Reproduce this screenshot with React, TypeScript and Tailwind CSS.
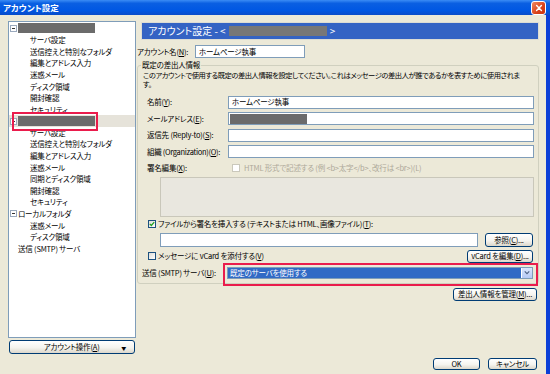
import React from 'react';

const FONT = "font-['Noto_Sans_CJK_JP',sans-serif] [font-feature-settings:'palt']";

function U({ c }: { c: string }) {
  return <span className="underline underline-offset-[1px] decoration-[0.5px]">{c}</span>;
}

function Btn({ children, className = '' }: { children: React.ReactNode; className?: string }) {
  return (
    <div
      className={`flex items-center justify-center whitespace-nowrap rounded-[3px] border border-[#003c74] bg-[linear-gradient(to_bottom,#ffffff_0%,#f5f4ef_55%,#dcd7cb_100%)] leading-none text-black ${className}`}
    >
      {children}
    </div>
  );
}

function Check({ checked = false, disabled = false }: { checked?: boolean; disabled?: boolean }) {
  return (
    <div
      className={`flex h-[8px] w-[8px] shrink-0 items-center justify-center border ${
        disabled ? 'border-[#cac8bb] bg-white' : 'border-[#1c5180] bg-[linear-gradient(135deg,#dcdcd7,#ffffff)]'
      }`}
    >
      {checked && (
        <svg viewBox="0 0 8 8" className="h-[6px] w-[6px]">
          <path d="M1 3.8 L3.1 6 L7 1.6" stroke="#21a121" strokeWidth="1.7" fill="none" />
        </svg>
      )}
    </div>
  );
}

function Minus() {
  return (
    <div className="flex h-[7px] w-[7px] shrink-0 items-center justify-center border border-[#9aa9bd] bg-white">
      <div className="h-[1px] w-[3px] bg-[#333]" />
    </div>
  );
}

type Row = { t?: string; kind: 'root' | 'child' | 'plain' | 'redacted'; minus?: boolean; sel?: boolean };

const tree: Row[] = [
  { kind: 'redacted', minus: true },
  { t: 'サーバ設定', kind: 'child' },
  { t: '送信控えと特別なフォルダ', kind: 'child' },
  { t: '編集とアドレス入力', kind: 'child' },
  { t: '迷惑メール', kind: 'child' },
  { t: 'ディスク領域', kind: 'child' },
  { t: '開封確認', kind: 'child' },
  { t: 'セキュリティ', kind: 'child' },
  { kind: 'redacted', minus: true, sel: true },
  { t: 'サーバ設定', kind: 'child' },
  { t: '送信控えと特別なフォルダ', kind: 'child' },
  { t: '編集とアドレス入力', kind: 'child' },
  { t: '迷惑メール', kind: 'child' },
  { t: '同期とディスク領域', kind: 'child' },
  { t: '開封確認', kind: 'child' },
  { t: 'セキュリティ', kind: 'child' },
  { t: 'ローカルフォルダ', kind: 'root', minus: true },
  { t: '迷惑メール', kind: 'child' },
  { t: 'ディスク領域', kind: 'child' },
  { t: '送信 (SMTP) サーバ', kind: 'plain' },
];

function TreeRow({ r }: { r: Row }) {
  const base = `flex h-[11.6px] items-center whitespace-nowrap ${r.sel ? 'bg-[#e6e3da]' : ''}`;
  if (r.kind === 'child') return <div className={`${base} pl-[21px]`}>{r.t}</div>;
  if (r.kind === 'plain') return <div className={`${base} pl-[9px]`}>{r.t}</div>;
  return (
    <div className={`${base} gap-[1px] pl-[1px]`}>
      {r.minus ? <Minus /> : <div className="w-[7px]" />}
      {r.kind === 'redacted' ? <div className="h-[10px] w-[77px] bg-[#6b6b6b]" /> : <span>{r.t}</span>}
    </div>
  );
}

function Field({ children, className = '' }: { children?: React.ReactNode; className?: string }) {
  return (
    <div className={`flex min-w-0 items-center border border-[#7f9db9] bg-white pl-[3px] leading-none ${className}`}>
      {children}
    </div>
  );
}

export default function App() {
  return (
    <div
      className={`relative flex h-[374px] w-[550px] flex-col overflow-hidden bg-[#ece9d8] text-[7.5px] leading-none tracking-[-0.2px] text-black ${FONT}`}
    >
      {/* title bar */}
      <div className="flex h-[15px] shrink-0 items-center justify-between bg-[linear-gradient(to_bottom,#3b8cf5_0%,#0a5fe2_22%,#0057e3_70%,#0a4cc9_100%)] pl-[3px] pr-[4px]">
        <span className="text-[8.5px] font-bold tracking-normal text-white">アカウント設定</span>
        <div className="flex h-[14px] w-[15px] items-center justify-center rounded-[3px] border border-white bg-[linear-gradient(135deg,#f08a63,#d9421a_60%,#c9330f)]">
          <svg viewBox="0 0 10 10" className="h-[8px] w-[8px]">
            <path d="M2 2 L8 8 M8 2 L2 8" stroke="white" strokeWidth="1.8" strokeLinecap="round" />
          </svg>
        </div>
      </div>

      {/* body */}
      <div className="flex min-h-0 flex-1 border-r-[4px] border-[#0b3fd7]">
        {/* left */}
        <div className="flex w-[137px] shrink-0 flex-col pl-[8px] pt-[6px]">
          <div className="h-[317px] w-[128px] overflow-hidden border border-[#7f9db9] bg-white pt-[0.5px]">
            {tree.map((r, i) => (
              <TreeRow key={i} r={r} />
            ))}
          </div>
          <Btn className="ml-[1px] mt-[2px] h-[14px] w-[126px] !justify-between px-[8px]">
            <span className="w-[4px]" />
            <span>
              アカウント操作(<U c="A" />)
            </span>
            <span className="text-[5px]">▼</span>
          </Btn>
        </div>

        {/* right */}
        <div className="flex w-[402px] min-w-0 shrink-0 flex-col pt-[7px]">
          <div className="ml-[4px] flex h-[18px] w-[398px] items-center gap-[3px] border border-[#dcdcd4] bg-[#3463c4] pl-[6px] text-[10px] tracking-normal text-white">
            <span>アカウント設定 - &lt;</span>
            <div className="h-[10px] w-[98px] bg-[#777777]" />
            <span>&gt;</span>
          </div>

          <div className="mt-[5px] flex h-[13px] items-center">
            <span className="w-[58px] whitespace-nowrap">
              アカウント名(<U c="N" />):
            </span>
            <Field className="h-[13px] w-[110px]">ホームページ執事</Field>
          </div>

          <fieldset className="mt-[3px] min-w-0 rounded-[3px] border border-[#d0d0bf] pb-[4px]">
            <legend className="ml-[3px] px-[1px] leading-[8px]">既定の差出人情報</legend>
            <div className="mt-[1.5px] flex flex-col gap-[1px] whitespace-nowrap pl-[5px] text-[7.3px] leading-[8.5px] tracking-[-0.45px]">
              <div>このアカウントで使用する既定の差出人情報を設定してください。これはメッセージの差出人が誰であるかを表すために使用されま</div>
              <div>す。</div>
            </div>

            <div className="mt-[7px] flex flex-col gap-[3.5px] pl-[9px] pr-[4px]">
              <div className="flex h-[13px] items-center">
                <span className="w-[81px] shrink-0 whitespace-nowrap">
                  名前(<U c="Y" />):
                </span>
                <Field className="h-[13px] flex-1">ホームページ執事</Field>
              </div>
              <div className="flex h-[13px] items-center">
                <span className="w-[81px] shrink-0 whitespace-nowrap">
                  メールアドレス(<U c="E" />):
                </span>
                <Field className="h-[13px] flex-1 !pl-[1px]">
                  <div className="h-[10px] w-[77px] bg-[#6b6b6b]" />
                </Field>
              </div>
              <div className="flex h-[13px] items-center">
                <span className="w-[81px] shrink-0 whitespace-nowrap">
                  返信先 (Reply-to)(<U c="S" />):
                </span>
                <Field className="h-[13px] flex-1" />
              </div>
              <div className="flex h-[13px] items-center">
                <span className="w-[81px] shrink-0 whitespace-nowrap tracking-[-0.3px]">
                  組織 (Organization)(<U c="O" />):
                </span>
                <Field className="h-[13px] flex-1" />
              </div>
            </div>

            <div className="mt-[5.5px] flex h-[8px] items-center whitespace-nowrap pl-[9px]">
              <span className="w-[85px] shrink-0">
                署名編集(<U c="X" />):
              </span>
              <Check disabled />
              <span className="ml-[4px] text-[#aca899]">
                HTML 形式で記述する (例 &lt;b&gt;太字&lt;/b&gt;、改行は &lt;br&gt;)(L)
              </span>
            </div>

            <div className="mt-[5px] pl-[22px] pr-[4px]">
              <div className="h-[40px] border border-[#c9c7ba] bg-[#e9e7df]" />
            </div>

            <div className="mt-[2.5px] flex h-[9px] items-center gap-[2px] whitespace-nowrap pl-[10px]">
              <Check checked />
              <span>
                ファイルから署名を挿入する (テキストまたは HTML、画像ファイル)(<U c="T" />):
              </span>
            </div>

            <div className="mt-[4.5px] flex h-[14px] items-center gap-[7px] pl-[22px] pr-[5px]">
              <Field className="h-[14px] flex-1" />
              <Btn className="h-[14px] w-[48px] shrink-0">
                参照(<U c="C" />)...
              </Btn>
            </div>

            <div className="mt-[3px] flex h-[13px] items-center justify-between pl-[10px] pr-[5px]">
              <div className="flex items-center gap-[2px] whitespace-nowrap">
                <Check />
                <span>
                  メッセージに vCard を添付する(<U c="V" />)
                </span>
              </div>
              <Btn className="h-[13px] w-[66px] shrink-0">
                vCard を編集(<U c="D" />)...
              </Btn>
            </div>

            <div className="mt-[4px] flex h-[12px] items-center pl-[4px] pr-[5px]">
              <span className="w-[85px] shrink-0 whitespace-nowrap">
                送信 (SMTP) サーバ(<U c="U" />):
              </span>
              <div className="flex h-[12px] min-w-0 flex-1 items-stretch border border-[#7f9db9] bg-white">
                <div className="flex flex-1 items-center bg-[#316ac5] pl-[2px] text-white">既定のサーバを使用する</div>
                <div className="flex w-[11px] items-center justify-center border-l border-white bg-[linear-gradient(to_bottom,#dbe6fd,#b5c9f5)]">
                  <svg viewBox="0 0 8 6" className="h-[5px] w-[6px]">
                    <path d="M1 1.5 L4 4.5 L7 1.5" stroke="#4d6185" strokeWidth="1.5" fill="none" />
                  </svg>
                </div>
              </div>
            </div>
          </fieldset>

          <div className="mr-[2px] mt-[4px] flex justify-end">
            <Btn className="h-[13px] w-[84px]">
              差出人情報を管理(<U c="M" />)...
            </Btn>
          </div>

          <div className="mb-[4px] mr-[2px] mt-auto flex justify-end gap-[8px]">
            <Btn className="h-[12px] w-[47px]">OK</Btn>
            <Btn className="h-[12px] w-[49px]">キャンセル</Btn>
          </div>
        </div>
      </div>

      {/* highlight overlays */}
      <div className="absolute left-[12px] top-[112px] h-[19px] w-[86px] border-[2px] border-[#ea1c4c]" />
      <div className="absolute left-[223px] top-[263px] h-[23px] w-[315px] border-[2px] border-[#ea1c4c]" />
    </div>
  );
}
